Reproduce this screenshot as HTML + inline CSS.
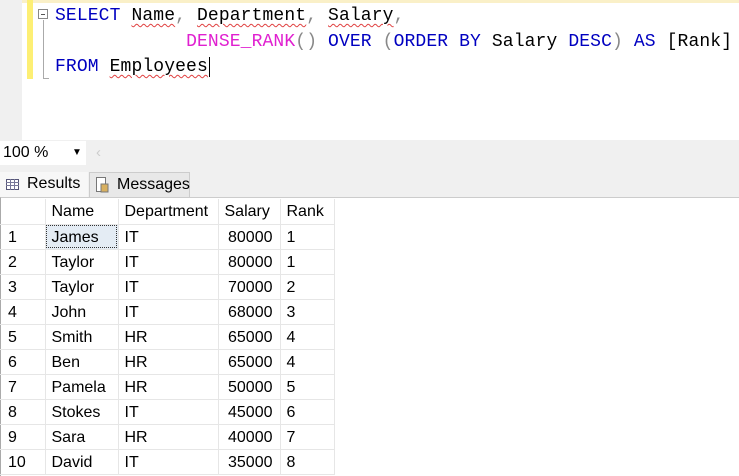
<!DOCTYPE html>
<html><head><style>
*{margin:0;padding:0;box-sizing:border-box}
body{width:739px;height:476px;overflow:hidden;background:#f0f0f0;font-family:"Liberation Sans",sans-serif;position:relative}
.ed{position:absolute;left:0;top:0;width:739px;height:140px;background:#fff}
.topband{position:absolute;left:0;top:0;width:739px;height:3px;background:#faf0c8}
.gut{position:absolute;left:0;top:0;width:22px;height:140px;background:#f0f0f0}
.yb{position:absolute;left:27px;top:0;width:6px;height:79px;background:#fdef74}
.code{position:absolute;left:55px;font-family:"Liberation Mono",monospace;font-size:18px;letter-spacing:0.12px;white-space:pre;color:#000}
.k{color:#0000c0}.f{color:#e020d0}.g{color:#888}
.sq{text-decoration:underline wavy #e04040;text-decoration-thickness:1px;text-underline-offset:3px}
.box{position:absolute;left:38px;top:9px;width:10px;height:10px;border:1px solid #888;background:#fff}
.box:after{content:"";position:absolute;left:2px;top:4px;width:4px;height:1px;background:#555}
.vl{position:absolute;left:43px;top:20px;width:1px;height:59px;background:#aaa}
.vl2{position:absolute;left:43px;top:78px;width:6px;height:1px;background:#aaa}
.zoom{position:absolute;left:0;top:141px;width:86px;height:24px;background:#fff;font-size:16px;padding:3px 0 0 3px}
.tab{position:absolute;top:172px;height:25px;font-size:16px;padding:3px 0 0 27px}
.grid{position:absolute;left:0;top:197px;width:739px;height:279px;background:#fff;border-top:1px solid #ccc;border-left:1px solid #aaa}
table{border-collapse:collapse;font-size:16px;position:absolute;left:-1px;top:1px}
td{height:25px;border:1px solid #e6e6e6;padding:2px 0 0 6px;white-space:nowrap}
tr td:first-child{border-left:none;padding-left:8px}
tr:first-child td{border-top:none}
.r{text-align:right;padding-right:7px}
</style></head><body>
<div class="ed"></div><div class="topband"></div><div class="gut"></div><div class="yb"></div>
<div class="box"></div><div class="vl"></div><div class="vl2"></div>
<div class="code" style="top:6px"><span class="k">SELECT</span> <span class="sq">Name</span><span class="g">,</span> <span class="sq">Department</span><span class="g">,</span> <span class="sq">Salary</span><span class="g">,</span></div>
<div class="code" style="top:32px">            <span class="f">DENSE_RANK</span><span class="g">()</span> <span class="k">OVER</span> <span class="g">(</span><span class="k">ORDER BY</span> Salary <span class="k">DESC</span><span class="g">)</span> <span class="k">AS</span> [Rank]</div>
<div class="code" style="top:57px"><span class="k">FROM</span> <span class="sq">Employees</span><span style="border-left:1px solid #000;margin-left:1px"></span></div>
<div class="zoom">100 %<span style="position:absolute;left:72px;top:6px;font-size:10px">▼</span></div>
<div style="position:absolute;left:96px;top:144px;color:#ccc;font-size:15px">‹</div>
<div class="tab" style="left:0;width:88px;background:#f7f7f7">Results
<svg style="position:absolute;left:6px;top:7px" width="13" height="11"><rect x=".5" y=".5" width="12" height="10" fill="#fff" stroke="#557"/><path d="M0 3.5H13M0 6.5H13M4.5 0V11M8.5 0V11" stroke="#779"/></svg></div>
<div class="tab" style="left:89px;width:101px;background:#e8e8e8;border:1px solid #ccc;border-bottom:none">Messages
<svg style="position:absolute;left:5px;top:4px" width="16" height="17"><rect x="1.5" y=".5" width="9" height="14" fill="#fff" stroke="#777"/><rect x="6" y="7" width="7" height="8" fill="#d8b060" stroke="#777"/></svg></div>
<div class="grid">
<table>
<tr><td style="width:45px"></td><td style="width:73px">Name</td><td style="width:100px">Department</td><td style="width:62px">Salary</td><td style="width:54px">Rank</td></tr>
<tr><td>1</td><td style="background:#e4ecf4;outline:1px dotted #333;outline-offset:-2px">James</td><td>IT</td><td class="r">80000</td><td>1</td></tr>
<tr><td>2</td><td>Taylor</td><td>IT</td><td class="r">80000</td><td>1</td></tr>
<tr><td>3</td><td>Taylor</td><td>IT</td><td class="r">70000</td><td>2</td></tr>
<tr><td>4</td><td>John</td><td>IT</td><td class="r">68000</td><td>3</td></tr>
<tr><td>5</td><td>Smith</td><td>HR</td><td class="r">65000</td><td>4</td></tr>
<tr><td>6</td><td>Ben</td><td>HR</td><td class="r">65000</td><td>4</td></tr>
<tr><td>7</td><td>Pamela</td><td>HR</td><td class="r">50000</td><td>5</td></tr>
<tr><td>8</td><td>Stokes</td><td>IT</td><td class="r">45000</td><td>6</td></tr>
<tr><td>9</td><td>Sara</td><td>HR</td><td class="r">40000</td><td>7</td></tr>
<tr><td>10</td><td>David</td><td>IT</td><td class="r">35000</td><td>8</td></tr>
</table>
</div>
</body></html>
